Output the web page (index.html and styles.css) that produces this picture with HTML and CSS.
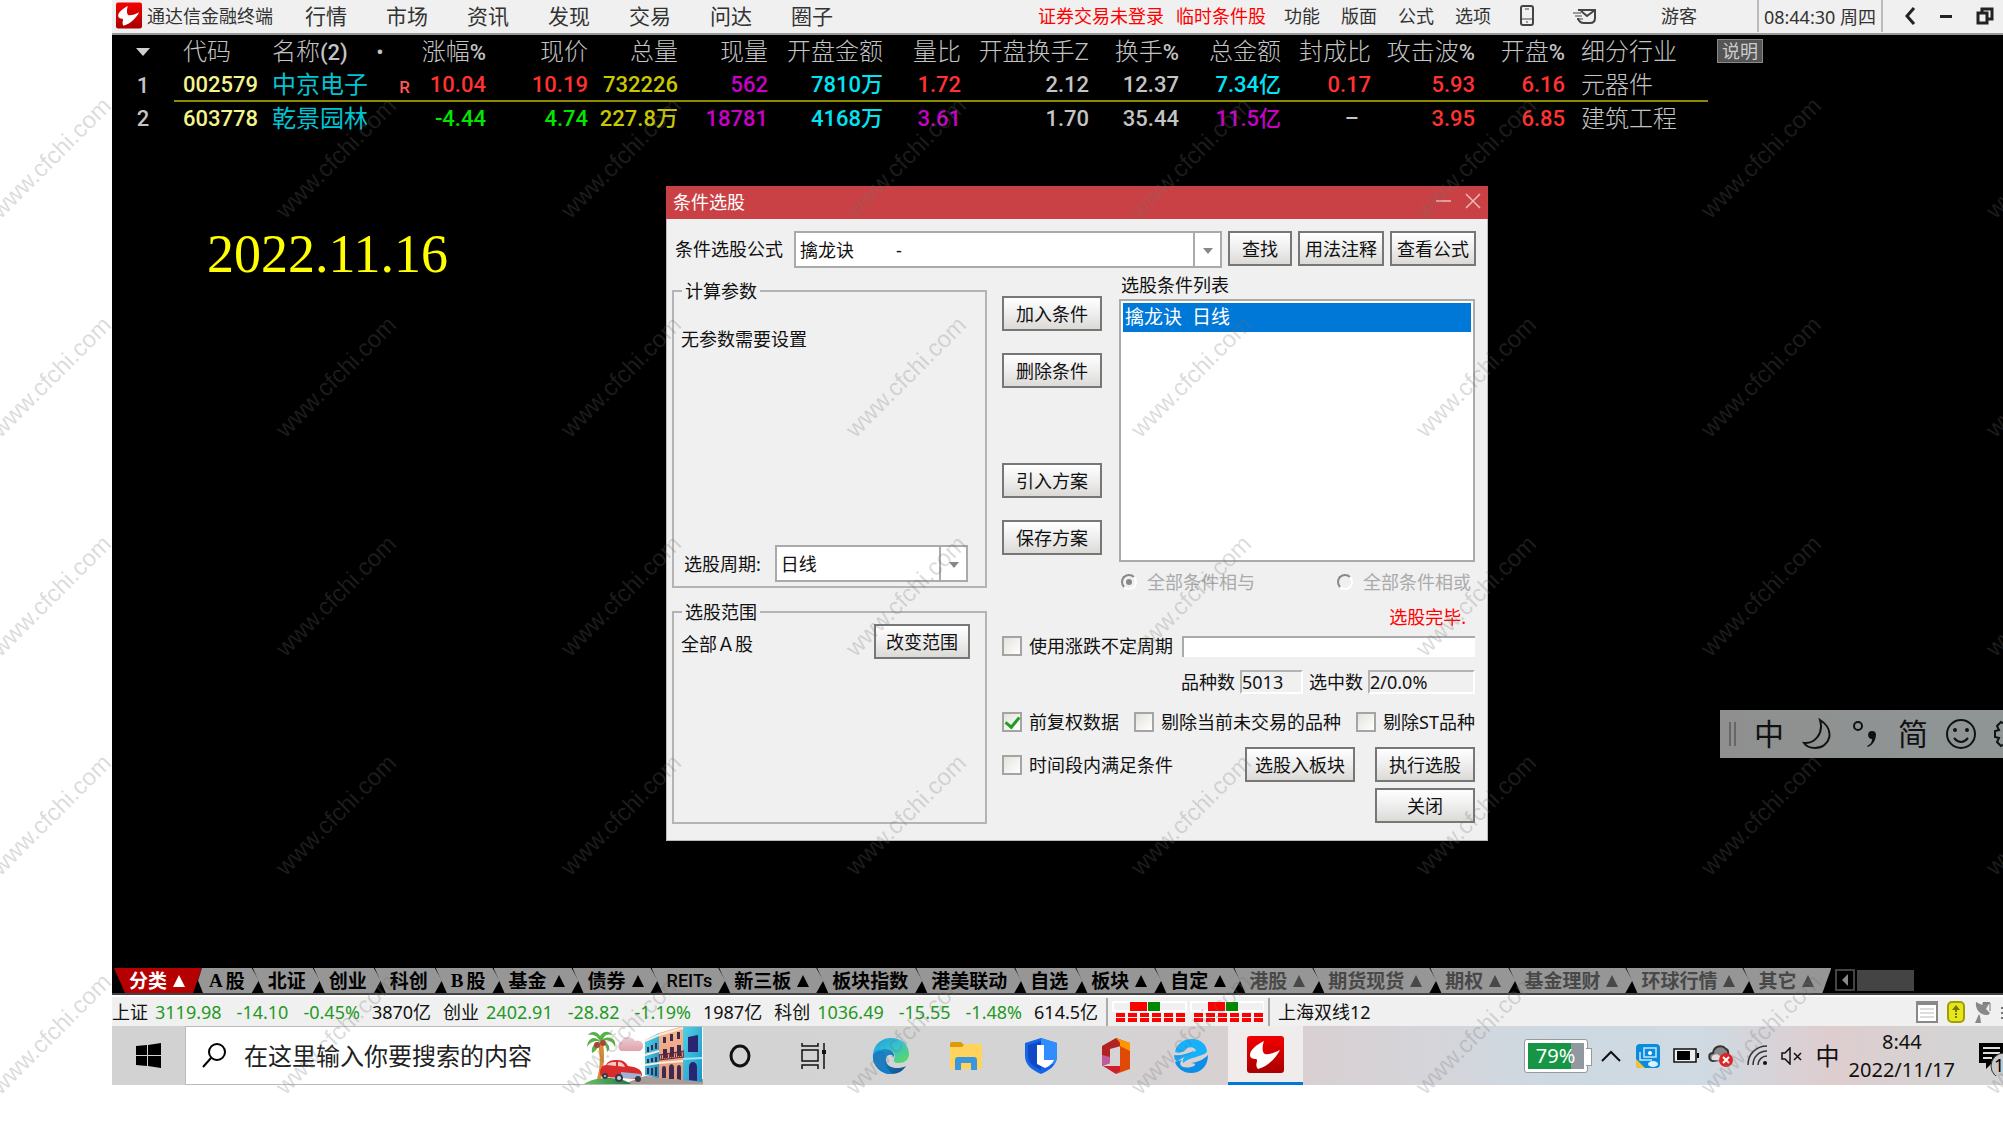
FILE: index.html
```html
<!DOCTYPE html>
<html lang="zh-CN">
<head>
  <meta charset="UTF-8" />
  <title>通达信金融终端</title>
  <link rel="stylesheet" href="styles.css">
</head>
<body>

  <!-- shared logo -->
  <svg class="defs" width="0" height="0">
    <defs>
      <linearGradient id="logo-red" x1="0" y1="0" x2="0" y2="1">
        <stop offset="0" stop-color="#f50000" />
        <stop offset="1" stop-color="#a80000" />
      </linearGradient>
      <symbol id="logo" viewBox="0 0 37 37">
        <rect width="37" height="37" rx="3" fill="url(#logo-red)" />
        <path d="M17 5 C9 9 3 14 3 19 C3 22 6 23 9 23 C12 24 7 29 11 33 C20 31 29 22 33 14 C27 17 21 19 18 18 C15 17 15 10 17 5 Z" fill="#fff" />
      </symbol>
    </defs>
  </svg>

  <div class="screen">

    <header class="topbar">
      <svg class="brand-logo" width="26" height="27"><use href="#logo" /></svg>
      <span class="brand">通达信金融终端</span>
      <nav class="menu">
        <a href="#">行情</a>
        <a href="#">市场</a>
        <a href="#">资讯</a>
        <a href="#">发现</a>
        <a href="#">交易</a>
        <a href="#">问达</a>
        <a href="#">圈子</a>
      </nav>
      <div class="tools">
        <a class="alert" href="#">证券交易未登录</a>
        <a class="alert" href="#">临时条件股</a>
        <a href="#">功能</a>
        <a href="#">版面</a>
        <a href="#">公式</a>
        <a href="#">选项</a>
        <svg class="phone" width="14" height="21" viewBox="0 0 14 21" fill="none" stroke="#444" stroke-width="2">
          <rect x="1" y="1" width="12" height="19" rx="2" />
          <path d="M1 14 H13 M5 4 H9 M6 17 H8" stroke-width="1" />
        </svg>
        <svg class="mail" width="24" height="16" viewBox="0 0 24 16" fill="none" stroke="#444" stroke-width="2">
          <path d="M5 2 H22 V10 C22 13 20 15 17 15 H11 C8 15 5 13 5 10 M8 3 L14 8 L22 2" />
          <path d="M0 5 H8 M2 8 H9 M4 11 H10" stroke-width="1" />
        </svg>
        <a class="guest" href="#">游客</a>
        <span class="clock">08:44:30 周四</span>
        <svg width="12" height="18" viewBox="0 0 12 18" fill="none" stroke="#222" stroke-width="3"><path d="M10 1 L3 9 L10 17" /></svg>
        <svg class="window-icon" width="12" height="18" viewBox="0 0 12 18"><rect y="8" width="12" height="3" fill="#222" /></svg>
        <svg class="window-icon" width="18" height="18" viewBox="0 0 18 18" fill="none" stroke="#222" stroke-width="3">
          <path d="M6 5 V2 H16 V12 H12" /><rect x="2" y="6" width="9" height="10" />
        </svg>
      </div>
    </header>

    <main class="board">
      <div class="quotes-wrap">
        <table class="quotes">
          <colgroup>
            <col class="w-idx"><col class="w-code"><col class="w-name"><col class="w-mark">
            <col class="w-chg"><col class="w-price"><col class="w-90"><col class="w-90">
            <col class="w-amt"><col class="w-ratio"><col class="w-turn"><col class="w-90">
            <col class="w-price"><col class="w-90"><col class="w-wave"><col class="w-90"><col class="w-trade">
          </colgroup>
          <thead>
            <tr>
              <th class="mid"><svg class="sort" width="14" height="8" viewBox="0 0 14 8"><path d="M0 0 H14 L7 8 Z" fill="#d0d0d0" /></svg></th>
              <th class="code">代码</th>
              <th class="left">名称<b>(2)</b></th>
              <th class="left dot">•</th>
              <th>涨幅<b>%</b></th>
              <th>现价</th>
              <th>总量</th>
              <th>现量</th>
              <th>开盘金额</th>
              <th>量比</th>
              <th>开盘换手Z</th>
              <th>换手<b>%</b></th>
              <th>总金额</th>
              <th>封成比</th>
              <th>攻击波<b>%</b></th>
              <th>开盘<b>%</b></th>
              <th class="trade">细分行业</th>
            </tr>
          </thead>
          <tbody>
            <tr class="current">
              <td class="mid">1</td>
              <td class="code">002579</td>
              <td class="name">中京电子</td>
              <td class="mark">R</td>
              <td class="up">10.04</td>
              <td class="up">10.19</td>
              <td class="vol">732226</td>
              <td class="purple">562</td>
              <td class="cyan">7810万</td>
              <td class="up">1.72</td>
              <td>2.12</td>
              <td>12.37</td>
              <td class="cyan">7.34亿</td>
              <td class="up">0.17</td>
              <td class="up">5.93</td>
              <td class="up">6.16</td>
              <td class="trade">元器件</td>
            </tr>
            <tr>
              <td class="mid">2</td>
              <td class="code">603778</td>
              <td class="name">乾景园林</td>
              <td></td>
              <td class="down">-4.44</td>
              <td class="down">4.74</td>
              <td class="vol">227.8万</td>
              <td class="purple">18781</td>
              <td class="cyan">4168万</td>
              <td class="purple">3.61</td>
              <td>1.70</td>
              <td>35.44</td>
              <td class="purple">11.5亿</td>
              <td class="none">–</td>
              <td class="up">3.95</td>
              <td class="up">6.85</td>
              <td class="trade">建筑工程</td>
            </tr>
          </tbody>
        </table>
        <button class="explain">说明</button>
      </div>

      <p class="date">2022.11.16</p>
    </main>

    <div class="tabs">
      <button class="tab active">分类<i></i></button>
      <button class="tab first"><b>A</b>股</button>
      <button class="tab">北证</button>
      <button class="tab">创业</button>
      <button class="tab">科创</button>
      <button class="tab"><b>B</b>股</button>
      <button class="tab">基金<i></i></button>
      <button class="tab">债券<i></i></button>
      <button class="tab latin">REITs</button>
      <button class="tab">新三板<i></i></button>
      <button class="tab">板块指数</button>
      <button class="tab">港美联动</button>
      <button class="tab">自选</button>
      <button class="tab">板块<i></i></button>
      <button class="tab">自定<i></i></button>
      <button class="tab dim">港股<i></i></button>
      <button class="tab dim">期货现货<i></i></button>
      <button class="tab dim">期权<i></i></button>
      <button class="tab dim">基金理财<i></i></button>
      <button class="tab dim">环球行情<i></i></button>
      <button class="tab dim last">其它<i></i></button>
      <button class="scroll" aria-label="向左"></button>
      <span class="thumb"></span>
    </div>

    <div class="indexbar">
      <span class="index"><span>上证</span><em>3119.98</em><em class="chg">-14.10</em><em class="chg">-0.45%</em><span class="sum">3870亿</span></span>
      <span class="index"><span>创业</span><em>2402.91</em><em class="chg">-28.82</em><em class="chg">-1.19%</em><span class="sum">1987亿</span></span>
      <span class="index"><span>科创</span><em>1036.49</em><em class="chg">-15.55</em><em class="chg">-1.48%</em><span class="sum">614.5亿</span></span>
      <span class="lights">
        <svg width="152" height="22" viewBox="0 0 152 22">
          <defs>
            <g id="light">
              <rect x="1" y="1" width="73" height="9" fill="none" stroke="#fff" stroke-width="2" />
              <rect x="18" y="1" width="17" height="9" fill="#f00" />
              <rect x="36" y="1" width="12" height="9" fill="#080" />
              <path d="M4 14 H74 M4 19 H74" stroke="#f00" stroke-width="4" stroke-dasharray="9 3" />
            </g>
          </defs>
          <use href="#light" /><use href="#light" x="78" />
        </svg>
      </span>
      <span class="line">上海双线12</span>
      <div class="status-icons">
        <svg width="22" height="22" viewBox="0 0 22 22"><rect x="1" y="1" width="20" height="20" fill="#fff" stroke="#888" stroke-width="2" /><path d="M2 3 H20" stroke="#888" stroke-width="2" /><path d="M4 8 H18 M4 12 H18 M4 16 H18" stroke="#ddd" stroke-width="2" /></svg>
        <svg width="18" height="22" viewBox="0 0 18 22"><rect x="1" y="1" width="16" height="20" rx="4" fill="#e6e61e" stroke="#a0a000" stroke-width="2" /><path d="M9 4 L5 9 H13 Z M8 9 h2 v2 h-2 Z M8 12 h2 v2 h-2 Z M8 15 h2 v2 h-2 Z" fill="#777700" /></svg>
        <svg width="18" height="22" viewBox="0 0 18 22"><path d="M2 1 C1 8 6 15 14 14 L16 12 L12 8 L16 1 H9 L8 4 Z M5 13 L1 22 H7 L6 15 Z" fill="#888" /><path d="M9 2 H16 V10" fill="none" stroke="#777" /></svg>
        <svg width="2" height="20" viewBox="0 0 2 20"><path d="M0 7 H2 M0 12 H2 M0 17 H2" stroke="#777" stroke-width="2" /></svg>
      </div>
    </div>

    <footer class="taskbar">
      <button class="start" aria-label="开始">
        <svg width="25" height="25" viewBox="0 0 25 25"><path d="M0 3 L11 2 V12 H0 Z M12 2 L25 0 V12 H12 Z M0 13 H11 V23 L0 22 Z M12 13 H25 V25 L12 23 Z" /></svg>
      </button>
      <label class="search">
        <svg width="25" height="25" viewBox="0 0 25 25" fill="none" stroke="#000" stroke-width="2"><circle cx="15" cy="9" r="8" /><path d="M9 15 L1 24" /></svg>
        <input type="text" placeholder="在这里输入你要搜索的内容" aria-label="搜索">
        <svg class="scene" width="120" height="57" viewBox="0 0 120 57">
          <defs>
            <linearGradient id="cloud" x1="0" y1="0" x2="0" y2="1"><stop offset="0" stop-color="#eecbd0" /><stop offset="1" stop-color="#dfa3ad" /></linearGradient>
            <linearGradient id="hill" x1="0" y1="0" x2="1" y2="0"><stop offset="0" stop-color="#6cc06a" /><stop offset="1" stop-color="#1f7a44" /></linearGradient>
            <linearGradient id="sea" x1="0" y1="0" x2="1" y2="1"><stop offset="0" stop-color="#4fd2e6" /><stop offset="1" stop-color="#1c93c9" /></linearGradient>
            <linearGradient id="peach" x1="0" y1="0" x2="0" y2="1"><stop offset="0" stop-color="#f6b48e" /><stop offset="1" stop-color="#e59a80" /></linearGradient>
          </defs>
          <path d="M38 24 a5 5 0 0 1 0 -9 a8 8 0 0 1 14 -1 a5 5 0 0 1 5 10 Z" fill="url(#cloud)" />
          <!-- street -->
          <path d="M40 57 L62 49 L98 51 L120 52 V57 Z" fill="#a99c97" />
          <!-- houses -->
          <path d="M62 13 L76 6 V51 L62 48 Z" fill="url(#sea)" />
          <path d="M76 6 L100 -1 V53 L76 51 Z" fill="url(#peach)" />
          <path d="M100 0 H119 V55 L100 53 Z" fill="url(#sea)" />
          <path d="M62 14 L76 8 L100 1 M62 28 L76 24 M62 38 L76 36 M76 36 L100 34" fill="none" stroke="#fdebd6" stroke-width="2" />
          <path d="M100 32 L119 31" stroke="#9fe6f4" stroke-width="2" />
          <g fill="#3d2a4c">
            <path d="M64 20 h2 v5 h-2 Z M68 18 h2 v5 h-2 Z M72 16 h2 v6 h-2 Z M64 32 h2 v4 h-2 Z M68 31 h2 v4 h-2 Z M72 30 h2 v5 h-2 Z" />
            <path d="M64 47 V41 h2 v6 Z M68 48 V41 h2 v7 Z M72 49 V40 h2 v9 Z" />
            <path d="M80 10 h3 v6 h-3 Z M87 7 h3 v7 h-3 Z M94 5 h3 v7 h-3 Z M80 22 h4 v9 h-4 Z M87 20 h4 v10 h-4 Z M94 18 h4 v11 h-4 Z" />
            <path d="M79 51 V42 a2 3 0 0 1 4 0 V51 Z M86 52 V41 a2 3 0 0 1 5 0 V52 Z M94 52 V41 a2 3 0 0 1 4 0 V53 Z" />
          </g>
          <path d="M76 30 L101 27" stroke="#6b2a3c" stroke-width="5" stroke-dasharray="1 1" />
          <path d="M76 28 L101 24 M76 33 L101 30" stroke="#5b2330" />
          <g fill="#2b2470">
            <path d="M105 25 V10 L115 8 V25 Z M106 53 V40 a4 5 0 0 1 8 0 V54 Z" />
          </g>
          <!-- hill and palm -->
          <path d="M1 57 C12 49 38 49 48 57 Z" fill="url(#hill)" />
          <path d="M14 52 C18 38 17 28 15 16 H20 C22 28 21 40 18 52 Z" fill="#d98a35" />
          <path d="M17 14 C10 8 5 12 4 20 C8 14 12 14 17 14 C11 16 8 20 9 26 C13 24 16 20 17 14 C22 16 24 20 24 25 C28 22 27 17 20 14 C25 12 30 15 32 20 C34 12 27 8 20 12 C22 7 26 7 29 8 C26 3 20 4 17 9 C14 4 8 4 5 8 C11 7 14 9 17 14 Z" fill="#56b146" />
          <circle cx="14" cy="18" r="3" fill="#a8453a" /><circle cx="20" cy="16" r="3" fill="#a8453a" />
          <!-- car -->
          <path d="M17 44 C18 40 20 38 23 38 C25 34 28 33 34 33 C41 33 43 36 45 39 C53 40 59 42 59 48 L57 52 L20 50 C17 49 17 46 17 44 Z" fill="#d92b2b" />
          <path d="M24 38 C26 35 29 35 33 35 V39 Z M35 35 C39 35 41 37 42 40 L35 39 Z" fill="#f3c9c9" />
          <path d="M38 45 L58 47 V51 L38 51 Z" fill="#9db4d4" />
          <circle cx="22" cy="49" r="3" fill="#3a3a48" /><circle cx="36" cy="51" r="4" fill="#3a3a48" /><circle cx="55" cy="52" r="3" fill="#3a3a48" />
          <circle cx="36" cy="51" r="2" fill="#cdd3de" /><circle cx="22" cy="49" r="1" fill="#cdd3de" />
        </svg>
      </label>

      <div class="apps">
        <button aria-label="Cortana"><svg width="26" height="26" viewBox="0 0 26 26"><ellipse cx="12" cy="13" rx="9" ry="10" fill="none" stroke="#111" stroke-width="3" /></svg></button>
        <button aria-label="任务视图"><svg width="30" height="28" viewBox="0 0 30 28" fill="none" stroke="#111" stroke-width="1.5"><path d="M1 1 V4 H17 V1 M1 27 V23 H17 V27" /><rect x="1" y="8" width="16" height="11" /><path d="M23 1 V27" /><path d="M21 10 H25" stroke-width="4" /></svg></button>
        <button aria-label="Edge">
          <svg width="38" height="38" viewBox="0 0 38 38">
            <defs>
              <linearGradient id="edge-top" x1="0" y1="0" x2="1" y2="1"><stop offset="0" stop-color="#1e9be0" /><stop offset=".5" stop-color="#35c4cf" /><stop offset="1" stop-color="#62db4e" /></linearGradient>
              <linearGradient id="edge-low" x1="0" y1="0" x2="1" y2="1"><stop offset="0" stop-color="#1a9fdd" /><stop offset="1" stop-color="#114a8b" /></linearGradient>
            </defs>
            <path d="M1 17 C2 7 10 1 19 1 C30 1 37 8 37 17 C37 23 32 26 27 26 C23 26 21 25 22 22 C25 18 20 12 14 12 C8 12 3 14 1 17 Z" fill="url(#edge-top)" />
            <path d="M1 17 C3 13 8 12 14 12 C20 12 23 17 22 20 C20 16 13 17 14 24 C15 31 26 33 34 29 C31 34 26 37 19 37 C9 37 0 29 1 17 Z" fill="url(#edge-low)" />
            <path d="M14 15 C11 21 12 31 21 37 C10 38 0 29 1 18 C4 14 9 13 14 15 Z" fill="#147fc9" />
          </svg>
        </button>
        <button aria-label="文件资源管理器"><svg width="34" height="30" viewBox="0 0 34 30"><path d="M1 3 Q1 1 3 1 H12 L15 4 V8 H1 Z" fill="#dd9b06" /><path d="M1 6 H13 L16 3 H31 Q33 3 33 5 V26 Q33 28 31 28 H1 Z" fill="#ffd35c" /><path d="M6 29 V19 Q6 16 9 16 H25 Q28 16 28 19 V29 H22 V22 H12 V29 Z" fill="#3a97dd" /></svg></button>
        <button aria-label="电脑管家"><svg width="34" height="38" viewBox="0 0 34 38"><path d="M17 1 L33 6 V19 C33 28 26 33 17 37 C8 33 1 28 1 19 V6 Z" fill="#1565e8" /><path d="M17 1 L33 6 V19 C33 22 32 25 30 27 H17 Z" fill="#2f8dff" /><path d="M17 4 L4 8 V19 C4 26 10 30 17 33 Z" fill="#1149c4" /><path d="M13 8 H20 V23 H30 Q27 29 21 31 L13 27 Z" fill="#fff" /></svg></button>
        <button aria-label="Office"><svg width="30" height="38" viewBox="0 0 30 38"><path d="M1 9 L15 1 L20 3 V9 L9 12 V26 L1 29 Z" fill="#b22222" /><path d="M1 18 L9 20 V26 L1 29 Z" fill="#c05a9a" /><path d="M15 1 L29 6 V32 L15 37 L19 33 V7 Z" fill="#e04a06" /><path d="M15 1 L29 6 V14 L19 9 V5 Z" fill="#ff9800" /><path d="M2 29 H19 V34 L15 37 Z" fill="#cf1f2d" /></svg></button>
        <button aria-label="浏览器"><svg width="36" height="36" viewBox="0 0 36 36"><path d="M2 14 C4 5 11 1 19 1 C28 1 34 7 34 14 C29 19 16 19 10 25 C9 20 12 16 23 13 C22 8 14 8 11 13 C8 15 5 15 2 14 Z" fill="#16b0fb" /><path d="M35 17 C35 29 27 35 18 35 C10 35 4 30 2 24 L9 22 C4 27 10 31 18 29 C23 28 24 25 18 25 C26 24 31 21 35 17 Z" fill="#0c8fe6" /><path d="M1 17 C7 18 15 16 22 12 C17 17 9 19 4 24 C2 22 1 20 1 17 Z" fill="#1aa3f0" /></svg></button>
        <button class="running" aria-label="通达信"><svg width="37" height="37"><use href="#logo" /></svg></button>
      </div>

      <div class="tray">
        <span class="battery"><span class="charge">79%</span></span>
        <svg class="up-arrow" width="20" height="12" viewBox="0 0 20 12" fill="none" stroke="#111" stroke-width="2"><path d="M1 11 L10 2 L19 11" /></svg>
        <svg class="intel" width="24" height="24" viewBox="0 0 24 24"><rect width="24" height="24" rx="4" fill="#0c8bdc" /><path d="M0 15 L9 24 H4 Q0 24 0 20 Z" fill="#f4c430" /><path d="M8 4 H20 V13 H8 Z M4 8 V16 H16" fill="none" stroke="#bfe9ff" stroke-width="1.5" /><circle cx="14" cy="9" r="2" fill="#fff" /><ellipse cx="17" cy="20" rx="5" ry="3" fill="#d8f0ff" /></svg>
        <svg class="power" width="26" height="15" viewBox="0 0 26 15"><rect x="1" y="1" width="22" height="13" fill="#eee" stroke="#111" stroke-width="1.5" /><rect x="4" y="3" width="13" height="9" /><rect x="24" y="5" width="2" height="5" /></svg>
        <svg width="26" height="24" viewBox="0 0 26 24"><path d="M5 17 C0 16 0 9 5 9 C6 2 14 0 18 5 C21 6 21 12 18 15 Z" fill="#888" stroke="#333" stroke-width="2" /><path d="M4 16 C2 12 8 8 12 12 L16 17 Z" fill="#ddd" /><circle cx="18" cy="16" r="7" fill="#e02424" /><path d="M15 13 L21 19 M21 13 L15 19" stroke="#fff" stroke-width="2" /></svg>
        <svg width="21" height="21" viewBox="0 0 21 21" fill="none" stroke="#333"><path d="M1 20 C1 9 9 1 20 1 M6 20 C6 12 12 6 20 6 M11 20 C11 15 15 11 20 11" stroke-width="1.5" /><circle cx="18" cy="18" r="2" fill="#111" stroke="none" /></svg>
        <svg width="22" height="18" viewBox="0 0 22 18" fill="none" stroke="#111"><path d="M1 6 H4 L9 1 V17 L4 12 H1 Z M13 6 L20 13 M20 6 L13 13" stroke-width="1.5" /></svg>
        <span class="lang">中</span>
        <span class="now"><time>8:44</time><time>2022/11/17</time></span>
        <svg class="notice" width="25" height="40" viewBox="0 0 25 40"><path d="M1 7 H25 V28 H13 L8 33 V27 H1 Z" /><path d="M5 12 H22 M5 17 H22 M5 22 H14" stroke="#ddd" stroke-width="2" /><circle cx="26" cy="30" r="13" fill="#c8c8c8" stroke="#333" /><text x="16" y="36">1</text></svg>
      </div>
    </footer>

    <section class="dialog">
      <div class="title">
        <span>条件选股</span>
        <svg width="46" height="16" viewBox="0 0 46 16" fill="none" stroke="#f0b8b8" stroke-width="1.5"><path d="M0 8 H15 M30 1 L44 15 M44 1 L30 15" /></svg>
      </div>

      <div class="dialog-body">
        <div class="formula">
          <label for="formula">条件选股公式</label>
          <span class="combo grow">
            <select id="formula"><option>擒龙诀&nbsp;&nbsp;&nbsp;&nbsp;&nbsp;&nbsp;&nbsp;&nbsp;&nbsp;-</option></select>
          </span>
          <button class="btn find">查找</button>
          <button class="btn tight">用法注释</button>
          <button class="btn tight">查看公式</button>
        </div>

        <div class="columns">
          <div class="side">
            <fieldset class="params">
              <legend>计算参数</legend>
              <p>无参数需要设置</p>
              <div class="period">
                <label for="period">选股周期:</label>
                <span class="combo"><select id="period"><option>日线</option></select></span>
              </div>
            </fieldset>
            <fieldset class="range">
              <legend>选股范围</legend>
              <div class="scope">
                <span>全部Ａ股</span>
                <button class="btn">改变范围</button>
              </div>
            </fieldset>
          </div>

          <div class="detail">
            <div class="conditions">
              <div class="actions">
                <button class="btn">加入条件</button>
                <button class="btn">删除条件</button>
                <button class="btn spaced">引入方案</button>
                <button class="btn">保存方案</button>
              </div>
              <div class="list">
                <span id="list-title">选股条件列表</span>
                <ul role="listbox" aria-labelledby="list-title">
                  <li role="option" aria-selected="true">擒龙诀  日线</li>
                </ul>
                <div class="radios">
                  <label><input type="radio" name="join" checked disabled>全部条件相与</label>
                  <label><input type="radio" name="join" disabled>全部条件相或</label>
                </div>
              </div>
            </div>

            <p class="done">选股完毕.</p>

            <div class="row">
              <label class="check"><input type="checkbox">使用涨跌不定周期</label>
              <input class="progress" type="text" readonly aria-label="进度">
            </div>
            <div class="row counts">
              <label for="total">品种数</label>
              <input class="count" id="total" type="text" value="5013" readonly>
              <label for="hits">选中数</label>
              <input class="count wide" id="hits" type="text" value="2/0.0%" readonly>
            </div>
            <div class="row checks">
              <label class="check"><input type="checkbox" checked>前复权数据</label>
              <label class="check"><input type="checkbox">剔除当前未交易的品种</label>
              <label class="check"><input type="checkbox">剔除ST品种</label>
            </div>
            <div class="row run">
              <label class="check"><input type="checkbox">时间段内满足条件</label>
              <button class="btn block">选股入板块</button>
              <button class="btn">执行选股</button>
            </div>
            <button class="btn close">关闭</button>
          </div>
        </div>
      </div>
    </section>

    <div class="ime">
      <span class="grip"></span>
      <button>中</button>
      <button aria-label="半角"><svg width="30" height="32" viewBox="0 0 30 32" fill="none" stroke="#111" stroke-width="2"><path d="M18 2 C34 12 28 30 13 30 C8 30 4 28 2 25 C13 26 22 15 18 2 Z" /></svg></button>
      <button aria-label="标点"><svg width="28" height="30" viewBox="0 0 28 30"><circle cx="7" cy="7" r="4" fill="none" stroke="#111" stroke-width="2" /><path d="M16 27 C20 25 21 23 21 20 A4 4 0 1 1 25 15 C25 21 22 26 17 28 Z" fill="#111" /></svg></button>
      <button>简</button>
      <button aria-label="表情"><svg width="32" height="32" viewBox="0 0 32 32" fill="none" stroke="#111" stroke-width="2"><circle cx="16" cy="16" r="14" /><circle cx="10" cy="12" r="1" /><circle cx="22" cy="12" r="1" /><path d="M9 20 Q16 28 23 20" /></svg></button>
      <button aria-label="设置"><svg width="32" height="32" viewBox="0 0 32 32" fill="none" stroke="#111" stroke-width="2"><path d="M13 2 H19 L20 6 L24 4 L28 9 L25 12 L30 14 V19 L26 20 L28 25 L23 28 L20 26 L19 30 H13 L12 26 L8 28 L4 24 L6 20 L2 19 V13 L6 12 L4 8 L8 4 L12 6 Z" /><circle cx="16" cy="16" r="5" /></svg></button>
    </div>
  </div>

  <div class="watermark" aria-hidden="true">
    <span>www.cfchi.com</span><span>www.cfchi.com</span><span>www.cfchi.com</span><span>www.cfchi.com</span><span>www.cfchi.com</span><span>www.cfchi.com</span><span>www.cfchi.com</span><span>www.cfchi.com</span>
    <span>www.cfchi.com</span><span>www.cfchi.com</span><span>www.cfchi.com</span><span>www.cfchi.com</span><span>www.cfchi.com</span><span>www.cfchi.com</span><span>www.cfchi.com</span><span>www.cfchi.com</span>
    <span>www.cfchi.com</span><span>www.cfchi.com</span><span>www.cfchi.com</span><span>www.cfchi.com</span><span>www.cfchi.com</span><span>www.cfchi.com</span><span>www.cfchi.com</span><span>www.cfchi.com</span>
    <span>www.cfchi.com</span><span>www.cfchi.com</span><span>www.cfchi.com</span><span>www.cfchi.com</span><span>www.cfchi.com</span><span>www.cfchi.com</span><span>www.cfchi.com</span><span>www.cfchi.com</span>
    <span>www.cfchi.com</span><span>www.cfchi.com</span><span>www.cfchi.com</span><span>www.cfchi.com</span><span>www.cfchi.com</span><span>www.cfchi.com</span><span>www.cfchi.com</span><span>www.cfchi.com</span>
  </div>

</body>
</html>
```

FILE: styles.css
```css
* {
  box-sizing: border-box;
}
body {
  margin: 0;
  position: relative;
  height: 100vh;
  overflow: hidden;
  background: #fff;
  color: #111;
  font-family: "Noto Sans", "Noto Sans CJK SC", sans-serif;
  font-size: 18px;
  line-height: 24px;
}
button, input, select {
  font: inherit;
  color: inherit;
  margin: 0;
  padding: 0;
  border: 0;
  background: none;
}
a {
  color: inherit;
  text-decoration: none;
}
p {
  margin: 0;
}
svg {
  flex: none;
}
.defs {
  position: absolute;
}
.screen {
  position: relative;
  display: flex;
  flex-direction: column;
  height: calc(100vh - 41px);
  margin-left: 112px;
  overflow: hidden;
  background: #000;
}

/* top menu */
.topbar {
  display: flex;
  align-items: center;
  height: 35px;
  padding: 0 9px 2px 4px;
  background: #f0f0f0;
  border-bottom: 2px solid #999;
  color: #333;
  white-space: nowrap;
}
.brand-logo {
  margin-right: 5px;
}
.menu {
  display: flex;
  gap: 39px;
  margin-left: 32px;
  font-size: 21px;
}
.tools {
  display: flex;
  align-items: center;
  gap: 21px;
  margin-left: auto;
}
.alert {
  margin-right: -3px;
  color: #f00;
}
.alert + .alert {
  margin-left: -6px;
}
.phone {
  margin-left: 8px;
}
.mail {
  margin-left: 18px;
}
.guest {
  margin: 0 39px 0 43px;
}
.clock {
  height: 32px;
  padding: 0 5px;
  border-left: 2px solid #bbb;
  border-right: 2px solid #bbb;
  line-height: 34px;
}
.window-icon {
  margin-left: 3px;
}

/* quotes */
.board {
  flex: 1;
}
.quotes-wrap {
  display: flex;
}
.quotes {
  width: 1596px;
  table-layout: fixed;
  border-collapse: collapse;
  color: #c4c4c4;
  font-family: Roboto, "Noto Sans CJK SC", sans-serif;
  font-size: 22px;
  font-weight: 500;
  white-space: nowrap;
}
.w-idx { width: 62px; }
.w-code { width: 98px; }
.w-name { width: 100px; }
.w-mark { width: 40px; }
.w-chg { width: 74px; }
.w-price { width: 102px; }
.w-90 { width: 90px; }
.w-amt { width: 115px; }
.w-ratio { width: 78px; }
.w-turn { width: 128px; }
.w-wave { width: 104px; }
.w-trade { width: 143px; }
.quotes th, .quotes td {
  height: 33px;
  padding: 2px 0 0;
  line-height: 30px;
  text-align: right;
}
.quotes th {
  padding-top: 1px;
  font-size: 24px;
  font-weight: 300;
}
.quotes th b {
  font-size: 22px;
  font-weight: 500;
}
.quotes .mid {
  text-align: center;
}
.sort {
  display: block;
  margin: 0 auto;
}
.quotes .left {
  text-align: left;
}
.quotes .dot {
  padding-left: 4px;
}
.quotes .code {
  padding-left: 9px;
  text-align: left;
}
.quotes td.code {
  color: #f4f48c;
}
.quotes .name {
  color: #00c4d4;
  font-size: 24px;
  font-weight: 400;
  text-align: left;
}
.quotes .mark {
  padding: 6px 2px 0 0;
  color: #f55;
  font-size: 17px;
  line-height: 24px;
}
.quotes .trade {
  padding-left: 16px;
  font-size: 24px;
  font-weight: 300;
  text-align: left;
}
.quotes .up { color: #ff3232; }
.quotes .down { color: #00e600; }
.quotes .vol { color: #c8c800; }
.quotes .purple { color: #c800c8; }
.quotes .cyan { color: #00e4f4; }
.quotes .none {
  padding-right: 12px;
}
.current td:not(.mid) {
  border-bottom: 2px solid #8c8c00;
}
.explain {
  align-self: flex-start;
  height: 24px;
  margin: 4px 0 0 9px;
  padding: 0 4px;
  background: #555;
  border: 1px solid #888;
  color: #ccc;
  line-height: 22px;
}
.date {
  padding: 87px 0 0 95px;
  color: #ffff00;
  font-family: "Liberation Serif", serif;
  font-size: 54px;
  line-height: 66px;
}

/* category tabs */
.tabs {
  display: flex;
  height: 27px;
  padding-left: 2px;
  border-bottom: 2px solid #444;
  white-space: nowrap;
}
.tab {
  display: flex;
  align-items: center;
  height: 25px;
  margin-left: -9px;
  padding: 0 17px 0 15px;
  background: #969696;
  clip-path: polygon(0 0, calc(100% - 10px) 0, calc(100% - 3px) 50%, calc(100% - 10px) 100%, 11px 100%);
  color: #000;
  font-size: 19px;
  font-weight: 700;
  line-height: 24px;
}
.tab i {
  margin-left: 6px;
  border: 6px solid transparent;
  border-top: 0;
  border-bottom: 12px solid;
}
.tab b {
  margin-right: 3px;
  font-family: "Liberation Serif", serif;
}
.tab.active {
  margin-left: 0;
  background: #b40000;
  clip-path: polygon(0 0, 100% 0, calc(100% - 9px) 100%, 11px 100%);
  color: #fff;
}
.tab.first {
  padding-left: 11px;
  margin-left: -4px;
  clip-path: polygon(4px 0, calc(100% - 10px) 0, calc(100% - 3px) 50%, calc(100% - 10px) 100%, 5px 100%, 0 50%);
}
.tab.latin {
  padding-right: 16px;
  font-family: Roboto, sans-serif;
  font-size: 18px;
  font-weight: 500;
}
.tab.dim {
  color: #484848;
}
.tab.last {
  clip-path: polygon(0 0, 100% 0, calc(100% - 9px) 100%, 11px 100%);
}
.scroll {
  width: 20px;
  height: 22px;
  margin: 1px 2px 0 4px;
  border: 2px solid #444;
}
.scroll::before {
  content: "";
  display: block;
  width: 0;
  margin: 0 auto;
  border: 6px solid transparent;
  border-left: 0;
  border-right: 6px solid #888;
}
.thumb {
  width: 57px;
  height: 21px;
  margin-top: 2px;
  background: #444;
}

/* index bar */
.indexbar {
  display: flex;
  align-items: center;
  height: 31px;
  background: #f0f0f0;
  border-top: 2px solid #fff;
  white-space: nowrap;
}
.index {
  display: flex;
  margin-right: 12px;
}
.index em {
  margin-left: 7px;
  color: #1f9a1f;
  font-style: normal;
}
.index .chg {
  margin-left: 15px;
}
.index .sum {
  margin-left: 12px;
}
.lights {
  display: flex;
  margin-left: -4px;
  padding: 3px 4px;
  border-left: 2px solid #aaa;
  border-right: 2px solid #aaa;
}
.line {
  margin-left: 8px;
}
.status-icons {
  display: flex;
  gap: 9px;
  margin-left: auto;
}

/* windows taskbar */
.taskbar {
  display: flex;
  height: 59px;
  background: linear-gradient(90deg, #d2d2d2 0%, #d4d4d4 50%, #d9cfd1 62%, #d5d5da 70%, #cdd9e2 76%, #cfdae2 84%, #decdcf 91%, #d4d4d4 98%);
}
.start {
  width: 73px;
}
.start svg {
  display: block;
  margin: 0 auto;
}
.search {
  display: flex;
  align-items: center;
  width: 518px;
  padding-left: 16px;
  background: #fff;
  border: 1px solid #bbb;
  border-width: 1px 0 1px 1px;
}
.search input {
  flex: 1;
  min-width: 0;
  margin-left: 17px;
  font-size: 24px;
  line-height: 32px;
}
.search input::placeholder {
  color: #222;
}
.apps {
  display: flex;
}
.apps button {
  display: flex;
  align-items: center;
  justify-content: center;
  width: 75px;
}
.apps .running {
  background: #f0ecec;
  border-bottom: 3px solid #0078d7;
}
.tray {
  display: flex;
  align-items: center;
  gap: 13px;
  margin-left: auto;
}
.battery {
  position: relative;
  width: 64px;
  height: 34px;
  padding: 3px;
  background: #fff;
  border: 1px solid #999;
  border-radius: 3px;
}
.battery::after {
  content: "";
  position: absolute;
  right: -5px;
  top: 8px;
  width: 5px;
  height: 16px;
  background: #fff;
  border: 1px solid #999;
  border-left: 0;
}
.charge {
  display: block;
  height: 26px;
  background: linear-gradient(90deg, #169645 77%, #9098a0 77%);
  color: #fff;
  font-size: 20px;
  line-height: 26px;
  text-align: center;
}
.up-arrow {
  margin-right: 2px;
}
.power {
  margin-right: -4px;
}
.lang {
  margin-right: -4px;
  font-size: 24px;
}
.now {
  display: flex;
  flex-direction: column;
  font-size: 20px;
  line-height: 28px;
  text-align: center;
}
.notice {
  margin-left: 10px;
  font-size: 18px;
}

/* stock picker dialog */
.dialog {
  position: absolute;
  left: 554px;
  top: 186px;
  width: 822px;
  background: #f0f0f0;
  border: 1px solid #bbb;
  border-top: 0;
  white-space: nowrap;
}
.title {
  display: flex;
  align-items: center;
  justify-content: space-between;
  height: 33px;
  padding: 0 6px 2px 7px;
  margin: 0 -1px;
  background: #c94144;
  color: #fff;
}
.title svg {
  margin-bottom: 2px;
}
.dialog-body {
  padding: 12px 11px 16px 5px;
}
.formula {
  display: flex;
  height: 37px;
}
.formula label {
  margin: 0 11px 0 3px;
  line-height: 36px;
}
.combo {
  position: relative;
  width: 193px;
  height: 37px;
  background: #fff;
  border: 2px solid #aaa;
}
.combo.grow {
  flex: 1;
}
.combo select {
  width: 100%;
  height: 33px;
  padding: 0 4px;
  appearance: none;
}
.combo::before {
  content: "";
  position: absolute;
  right: 25px;
  top: 0;
  height: 100%;
  border-left: 2px solid #aaa;
}
.combo::after {
  content: "";
  position: absolute;
  right: 7px;
  top: 15px;
  border: 5px solid transparent;
  border-top: 6px solid #888;
  border-bottom: 0;
}
.btn {
  min-width: 100px;
  height: 35px;
  padding: 0 8px;
  background: linear-gradient(#fff, #eee 50%, #dcdad6);
  border: 2px solid #777;
  color: #111;
  line-height: 30px;
}
.btn.find {
  min-width: 64px;
  margin-left: 6px;
}
.btn.tight {
  min-width: 86px;
  margin-left: 6px;
  padding: 0 4px;
}
.columns {
  display: flex;
  gap: 15px;
  margin-top: 4px;
}
.side {
  display: flex;
  flex-direction: column;
  gap: 12px;
  width: 315px;
  padding-top: 7px;
}
fieldset {
  margin: 0;
  padding: 0;
  border: 2px solid #b4b4b4;
}
legend {
  margin-left: 8px;
  padding: 0 3px;
}
.params {
  height: 309px;
}
.params p {
  padding: 24px 0 0 7px;
}
.period {
  display: flex;
  align-items: center;
  gap: 14px;
  margin-top: 194px;
  padding-left: 10px;
}
.range {
  height: 224px;
}
.scope {
  display: flex;
  align-items: center;
  justify-content: space-between;
  padding: 0 15px 0 7px;
}
.scope .btn {
  min-width: 96px;
  margin-bottom: 4px;
}
.detail {
  display: flex;
  flex-direction: column;
  flex: 1;
  padding-right: 1px;
}
.conditions {
  display: flex;
  gap: 17px;
}
.actions {
  display: flex;
  flex-direction: column;
  gap: 22px;
  padding-top: 24px;
}
.actions .spaced {
  margin-top: 53px;
}
.list {
  flex: 1;
}
.list > span {
  display: block;
  padding: 1px 0 2px 2px;
}
.list ul {
  height: 263px;
  margin: 0;
  padding: 2px;
  background: #fff;
  border: 2px solid #aaa;
  list-style: none;
}
.list li {
  padding-left: 2px;
  background: #0078d7;
  color: #fff;
  font-size: 19px;
  line-height: 29px;
  white-space: pre;
}
.radios {
  display: flex;
  justify-content: space-between;
  padding: 8px 4px 0 2px;
  color: #aaa;
}
.radios label {
  display: flex;
  align-items: center;
  gap: 10px;
}
.radios input {
  display: flex;
  align-items: center;
  justify-content: center;
  width: 16px;
  height: 16px;
  appearance: none;
  border: 2px solid #888;
  border-right-color: #fff;
  border-bottom-color: #fff;
  border-radius: 50%;
}
.radios input:checked::before {
  content: "";
  width: 6px;
  height: 6px;
  background: #888;
  border-radius: 50%;
}
.done {
  padding-right: 9px;
  margin-top: 11px;
  color: #f00;
  text-align: right;
}
.row {
  display: flex;
  align-items: center;
  margin-top: 5px;
}
.check {
  display: flex;
  align-items: center;
  gap: 7px;
}
.check input {
  display: flex;
  align-items: center;
  justify-content: center;
  width: 20px;
  height: 20px;
  appearance: none;
  background: linear-gradient(135deg, #e4e2da, #fff);
  border: 2px solid #a4a4a4;
}
.check input:checked::before {
  content: "";
  width: 6px;
  height: 11px;
  margin-bottom: 3px;
  border: solid #1f9f1f;
  border-width: 0 3px 3px 0;
  transform: rotate(40deg);
}
.progress {
  flex: 1;
  height: 21px;
  min-width: 0;
  margin-left: 9px;
  background: #fff;
  border-top: 2px solid #aaa;
  border-left: 2px solid #aaa;
}
.counts {
  justify-content: flex-end;
  gap: 5px;
  margin-top: 12px;
}
.count {
  width: 63px;
  height: 24px;
  margin-right: 1px;
  border: 2px solid #fff;
  border-top-color: #b4b4b4;
  border-left-color: #b4b4b4;
  line-height: 20px;
}
.count.wide {
  width: 107px;
  margin-right: 0;
}
.checks {
  justify-content: space-between;
  margin-top: 16px;
}
.run {
  margin-top: 13px;
}
.run .block {
  margin: 0 20px 0 auto;
}
.close {
  align-self: flex-end;
  margin-top: 6px;
}

/* input method bar */
.ime {
  position: absolute;
  left: 1608px;
  top: 710px;
  display: flex;
  align-items: center;
  height: 48px;
  padding-left: 9px;
  background: linear-gradient(90deg, #8f8f8f, #8f9696);
}
.ime .grip {
  width: 7px;
  height: 24px;
  margin-right: 9px;
  border: 2px solid #666;
  border-width: 0 2px;
}
.ime button {
  display: flex;
  align-items: center;
  justify-content: center;
  width: 48px;
  font-size: 30px;
  line-height: 40px;
}

/* site watermark over everything */
.watermark {
  position: absolute;
  inset: 0;
  display: grid;
  grid-template-columns: repeat(8, 285px);
  grid-auto-rows: 219px;
  justify-content: start;
  margin-left: -92px;
  padding-top: 48px;
  overflow: hidden;
  color: rgba(113, 113, 113, 0.25);
  font-family: "Liberation Sans", sans-serif;
  font-size: 24px;
  pointer-events: none;
}
.watermark span {
  display: flex;
  align-items: center;
  justify-content: center;
  transform: rotate(-45deg);
}
```
